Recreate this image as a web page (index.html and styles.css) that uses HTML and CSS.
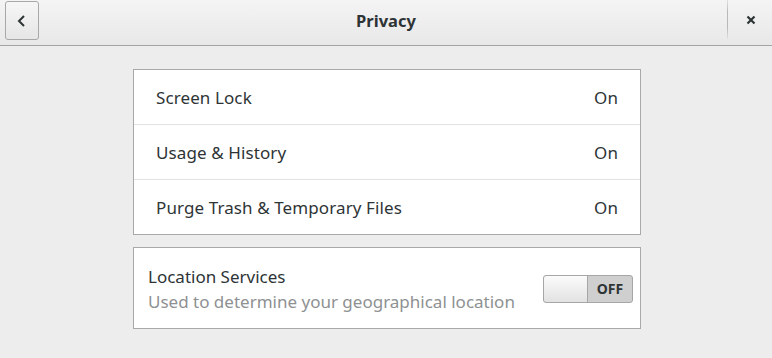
FILE: index.html
```html
<!DOCTYPE html>
<html>
<head>
<title>Privacy</title>
<link rel="stylesheet" href="styles.css">
</head>
<body>
<div class="header">
  <div class="back">
    <svg width="12" height="14" viewBox="0 0 12 14"><path d="M8 2 L3 7 L8 12" fill="none" stroke="#2e3436" stroke-width="2"/></svg>
  </div>
  <div class="title">Privacy</div>
  <div class="sep"></div>
  <div class="close">
    <svg width="10" height="10" viewBox="0 0 10 10"><path d="M1.5 1.5 L8.5 8.5 M8.5 1.5 L1.5 8.5" stroke="#2e3436" stroke-width="2.2"/></svg>
  </div>
</div>

<div class="content">
  <div class="list">
    <div class="row"><span>Screen Lock</span><span>On</span></div>
    <div class="row"><span>Usage &amp; History</span><span>On</span></div>
    <div class="row"><span>Purge Trash &amp; Temporary Files</span><span>On</span></div>
  </div>

  <div class="location">
    <div class="loc-text">
      <div class="loc-title">Location Services</div>
      <div class="loc-sub">Used to determine your geographical location</div>
    </div>
    <div class="switch">
      <div class="knob"></div>
      <div class="off">OFF</div>
    </div>
  </div>
</div>
</body>
</html>
```

FILE: styles.css
```css
html, body {
 margin: 0;
 padding: 0;
}

body {
 width: 772px;
 height: 358px;
 background-color: #ededed;
 font-family: "Noto Sans", "Open Sans", sans-serif;
 color: #2e3436;
 overflow: hidden;
}

.header {
 height: 45px;
 border-bottom: 1px solid #a4a4a4;
 background: linear-gradient(#f4f4f4, #e8e8e8);
 display: flex;
 align-items: flex-start;
}

.back {
 margin: 1px 0 0 5px;
 width: 32px;
 height: 37px;
 border: 1px solid #a8a8a8;
 border-radius: 3px;
 background: linear-gradient(#f6f6f6, #e6e6e6);
 display: flex;
 align-items: center;
 justify-content: center;
}

.title {
 flex: 1;
 text-align: center;
 font-weight: bold;
 font-size: 16.5px;
 line-height: 42px;
 padding-left: 6px;
}

.sep {
 width: 1px;
 height: 39px;
 background: linear-gradient(#e0e0e0, #b8b8b8 30%, #b8b8b8 70%, #e0e0e0);
 margin-right: 18px;
}

.close {
 width: 10px;
 margin-top: 15px;
 margin-right: 16px;
}

.close svg {
 display: block;
}

.content {
 padding: 23px 0 0 133px;
 width: 508px;
}

.list {
 background: #fff;
 border: 1px solid #a9a9a9;
}

.row {
 height: 54px;
 display: flex;
 justify-content: space-between;
 align-items: center;
 padding: 0 22px 0 22px;
 font-size: 17px;
 letter-spacing: 0.1px;
 border-top: 1px solid #e2e2e2;
}

.row:first-child {
 border-top: none;
}

.location {
 margin-top: 12px;
 background: #fff;
 border: 1px solid #a9a9a9;
 height: 80px;
 display: flex;
 align-items: center;
 justify-content: space-between;
 padding: 0 7px 0 14px;
}

.loc-text {
 margin-top: 3px;
}

.loc-title {
 font-size: 17px;
 line-height: 24px;
}

.loc-sub {
 font-size: 17px;
 line-height: 25px;
 color: #8e9192;
}

.switch {
 width: 88px;
 height: 26px;
 border: 1px solid #a6a6a6;
 border-radius: 3px;
 background: #cfcfcf;
 display: flex;
 margin-top: 2px;
}

.knob {
 width: 43px;
 height: 26px;
 background: linear-gradient(#fbfbfb, #e2e2e2);
 border-right: 1px solid #a6a6a6;
 border-radius: 3px 0 0 3px;
}

.off {
 flex: 1;
 text-align: center;
 font-weight: bold;
 font-size: 14px;
 line-height: 26px;
 color: #2e3436;
}
```
